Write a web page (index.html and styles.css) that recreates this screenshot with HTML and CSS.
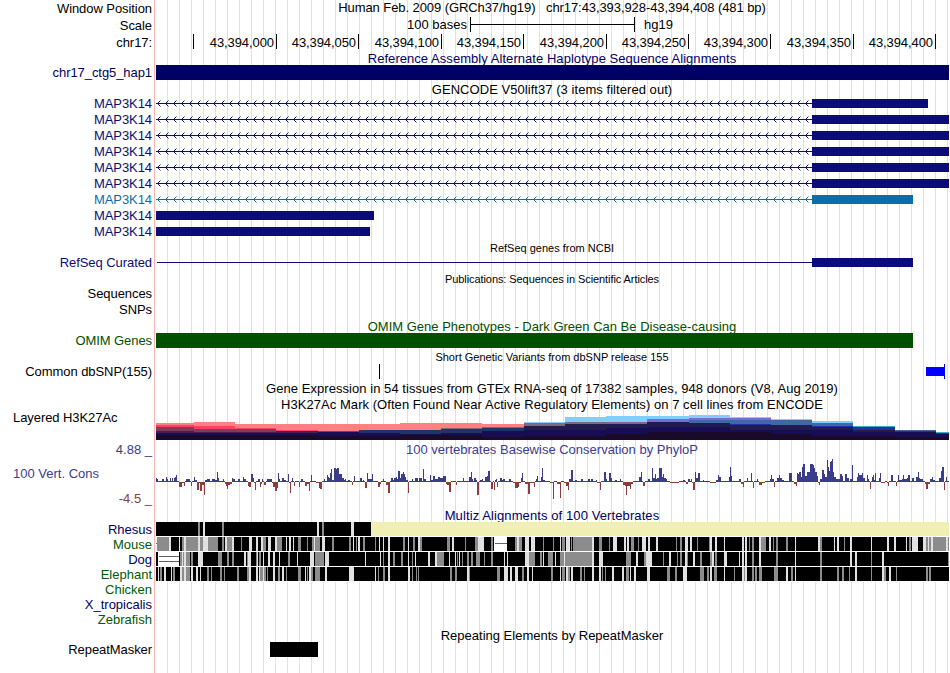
FILE: index.html
```html
<!DOCTYPE html>
<html lang="en">
<head>
    <meta charset="UTF-8">
    <title>Human chr17:43,393,928-43,394,408</title>
    <link rel="stylesheet" href="styles.css">
</head>
<body>
    <main class="browser">
        <!-- position, scale and ruler -->
        <div class="row ruler-row">
            <div class="label">Window Position</div>
            <div class="track title tight">Human Feb. 2009 (GRCh37/hg19) &nbsp; chr17:43,393,928-43,394,408 (481 bp)</div>
        </div>
        <div class="row ruler-row">
            <div class="label">Scale</div>
            <div class="track scale">
                <span class="scale-left">100 bases</span>
                <span class="scale-bar"></span>
                <span>hg19</span>
            </div>
        </div>
        <div class="row ruler-row">
            <div class="label">chr17:</div>
            <div class="track ruler">
                <span></span>
                <span>43,394,000</span>
                <span>43,394,050</span>
                <span>43,394,100</span>
                <span>43,394,150</span>
                <span>43,394,200</span>
                <span>43,394,250</span>
                <span>43,394,300</span>
                <span>43,394,350</span>
                <span>43,394,400</span>
            </div>
        </div>

        <div class="row title-row short hap">
            <div class="label"></div>
            <div class="track title wide">Reference Assembly Alternate Haplotype Sequence Alignments</div>
        </div>
        <div class="row hap">
            <div class="label">chr17_ctg5_hap1</div>
            <div class="track"><svg viewBox="155 0 794 16"><rect x="156" y="0" width="793" height="15"/></svg></div>
        </div>

        <div class="row title-row">
            <div class="label"></div>
            <div class="track title wide">GENCODE V50lift37 (3 items filtered out)</div>
        </div>
        <div id="genes"></div>

        <div class="row title-row small">
            <div class="label"></div>
            <div class="track title">RefSeq genes from NCBI</div>
        </div>
        <div class="row gene">
            <div class="label">RefSeq Curated</div>
            <div class="track"><svg viewBox="155 0 794 16"><rect x="157" y="7" width="655" height="1"/><rect x="812" y="3" width="101" height="9"/></svg></div>
        </div>

        <div class="row title-row small">
            <div class="label"></div>
            <div class="track title tight">Publications: Sequences in Scientific Articles</div>
        </div>
        <div class="row">
            <div class="label">Sequences</div>
            <div class="track"></div>
        </div>
        <div class="row">
            <div class="label">SNPs</div>
            <div class="track"></div>
        </div>

        <div class="row title-row omim">
            <div class="label"></div>
            <div class="track title">OMIM Gene Phenotypes - Dark Green Can Be Disease-causing</div>
        </div>
        <div class="row omim">
            <div class="label">OMIM Genes</div>
            <div class="track"><svg viewBox="155 0 794 16"><rect x="156" y="0" width="757" height="15"/></svg></div>
        </div>

        <div class="row title-row small">
            <div class="label"></div>
            <div class="track title">Short Genetic Variants from dbSNP release 155</div>
        </div>
        <div class="row">
            <div class="label">Common dbSNP(155)</div>
            <div class="track"><svg viewBox="155 0 794 16"><rect x="379" y="0" width="1" height="15"/><g class="snp"><rect x="926" y="3" width="18" height="9"/><rect x="944" y="0" width="1" height="15"/></g></svg></div>
        </div>

        <div class="row gtex">
            <div class="label"></div>
            <div class="track title wide">Gene Expression in 54 tissues from GTEx RNA-seq of 17382 samples, 948 donors (V8, Aug 2019)</div>
        </div>
        <div class="row title-row">
            <div class="label"></div>
            <div class="track title wide">H3K27Ac Mark (Often Found Near Active Regulatory Elements) on 7 cell lines from ENCODE</div>
        </div>
        <div class="row histone-row">
            <div class="label label-left">Layered H3K27Ac</div>
            <div class="track"><svg id="histone" viewBox="155 411 794 31"></svg></div>
        </div>

        <div class="row cons-row">
            <div class="label cons-labels">
                <span>4.88 _</span>
                <span class="cons-name">100 Vert. Cons</span>
                <span class="cons-min">-4.5 _</span>
            </div>
            <div class="track cons-track">
                <div class="title cons-title">100 vertebrates Basewise Conservation by PhyloP</div>
                <svg id="phylop" viewBox="155 458 794 50"></svg>
            </div>
        </div>

        <div class="row title-row short hap">
            <div class="label"></div>
            <div class="track title wider">Multiz Alignments of 100 Vertebrates</div>
        </div>
        <div id="species"></div>

        <div class="row title-row">
            <div class="label"></div>
            <div class="track title">Repeating Elements by RepeatMasker</div>
        </div>
        <div class="row">
            <div class="label">RepeatMasker</div>
            <div class="track"><svg viewBox="155 0 794 16"><rect x="270" y="0" width="48" height="15"/></svg></div>
        </div>
        <div class="row filler">
            <div class="label"></div>
            <div class="track"></div>
        </div>
    </main>
    <script src="tracks.js"></script>
</body>
</html>
```
FILE: styles.css
```css
body {
    margin: 0;
    background: #fff;
    color: #000;
    font-family: "Liberation Sans", Arial, sans-serif;
    font-size: 13px;
    overflow: hidden;
}
.browser {
    width: 949px;
    height: 673px;
    display: flex;
    flex-direction: column;
    /* guide lines every 12px */
    background: repeating-linear-gradient(to right, #dcdcff 0, #dcdcff 1px, transparent 1px, transparent 12px) 167px 0 / 782px 100% no-repeat;
}
.row {
    display: flex;
    flex: none;
    height: 16px;
    line-height: 16px;
    white-space: nowrap;
}
.label {
    width: 152px;
    padding-right: 2px;
    text-align: right;
    letter-spacing: -0.07px;
    border-right: 1px solid #ffb4b4;
    flex: none;
}
.track {
    width: 794px;
}
.title {
    text-align: center;
}
.tight {
    letter-spacing: -0.08px;
}
.wide {
    letter-spacing: 0.05px;
}
.wider {
    letter-spacing: 0.1px;
}
svg {
    display: block;
    width: 794px;
    fill: currentColor;
    shape-rendering: crispEdges;
}
.ruler-row {
    height: 17px;
    line-height: 18px;
}
.ruler-row .title {
    line-height: 16px;
}
.title-row {
    height: 15px;
    line-height: 17px;
}
.title-row.short {
    height: 14px;
    line-height: 15px;
}
.title-row.small {
    font-size: 11px;
    line-height: 16px;
}
.gtex {
    line-height: 18px;
}

.scale {
    display: flex;
    line-height: 16px;
}
.scale-left {
    width: 312px;
    margin-right: 3px;
    text-align: right;
}
.scale-bar {
    width: 163px;
    height: 15px;
    margin-right: 9px;
    border: solid #000;
    border-width: 0 1px;
    background: linear-gradient(#000, #000) 0 7px / 100% 1px no-repeat;
}
.ruler {
    display: grid;
    grid-template-columns: 39px 83px 82px 83px 82px 83px 82px 82px 83px 82px;
    letter-spacing: -0.08px;
}
.ruler span {
    height: 15px;
    padding-right: 2px;
    text-align: right;
    border-right: 1px solid #000;
}

.hap {
    color: #000064;
}
.gene {
    color: #0c0c78;
}
.gene.alt {
    color: #0c6cac;
}
.omim {
    color: #005000;
}
.snp {
    fill: #00f;
}

.histone-row {
    height: 31px;
    line-height: 14px;
}
.label-left {
    width: 141px;
    padding-left: 13px;
    padding-right: 0;
    text-align: left;
}
.cons-row {
    height: 66px;
    color: #3c3c8c;
}
.cons-labels {
    display: flex;
    flex-direction: column;
    letter-spacing: 0;
}
.cons-name {
    margin-top: 8px;
    padding-left: 13px;
    text-align: left;
}
.cons-min {
    margin-top: 9px;
    color: #8c3c3c;
}
.cons-title {
    height: 16px;
}

.species {
    height: 15px;
    line-height: 16px;
    color: #000064;
}
.species .label {
    letter-spacing: 0;
}
.species.green {
    color: #005a00;
}
.aligned .track {
    background: #fff;
}
.filler {
    flex: 1;
}
```
FILE: tracks.js
```javascript
const RIGHT = 949;

function rect(x, y, w, h, fill) {
    return `<rect x="${x}" y="${y}" width="${w}" height="${h}" fill="${fill}"/>`;
}

function row(cls, name, svg) {
    return `<div class="row ${cls}"><div class="label">${name}</div><div class="track">${svg}</div></div>`;
}

// transcripts: [exon start, exon end, has intron, extra class]
const genes = [
    [812, 928, true, ''],
    [812, 949, true, ''],
    [812, 949, true, ''],
    [812, 949, true, ''],
    [812, 949, true, ''],
    [812, 949, true, ''],
    [812, 913, true, 'alt'],
    [156, 374, false, ''],
    [156, 370, false, '']
];

document.getElementById('genes').innerHTML = genes.map(([start, end, intron, cls]) => {
    let body = '';
    if (intron) {
        body += rect(156, 7, start - 156, 1, 'currentColor');
        let tips = '';
        for (let x = 157; x < start - 3; x += 8) {
            for (let i = 1; i < 3; i++) {
                body += rect(x + i, 7 - i, 1, 1, 'currentColor');
                body += rect(x + i, 7 + i, 1, 1, 'currentColor');
            }
            tips += rect(x + 3, 4, 1, 1, 'currentColor') + rect(x + 3, 10, 1, 1, 'currentColor');
        }
        body += `<g opacity="0.45">${tips}</g>`;
    }
    body += rect(start, 3, end - start, 9, 'currentColor');
    return row('gene ' + cls, 'MAP3K14', `<svg viewBox="155 0 794 16">${body}</svg>`);
}).join('');

// histone layers, each column is x followed by y/colour steps
const inks = {
    p: '#ff8080', h: '#ff4068', m: '#803c54', v: '#4c1c50', n: '#180c54', k: '#180a28',
    s: '#203468', g: '#806880', c: '#80d0ff', i: '#201c50', u: '#8068d0', b: '#4068a8',
    r: '#2030a8', t: '#38b0b8'
};
const histone = [
    '156 423p 425h 427m 431v 433n 435k',
    '194 422p 426h 429m 432v 433n 435k',
    '235 424p 428h 429m 432v 433n 435k',
    '276 424p 430h 431v 433n 435k',
    '318 424p 431m 432n 436k',
    '359 424p 430s 433n 436k',
    '400 423p 430s 434n 435k',
    '441 423p 428g 429s 433n 435k',
    '482 424p 427g 428s 431n 437k',
    '524 422c 423g 426i 430n 436k',
    '565 417c 422g 424i 430n 436k',
    '606 416c 422g 424i 428n 434k',
    '647 416c 419u 422i 427n 432k',
    '689 415c 418u 420b 423i 427n 432k',
    '730 417c 418u 420b 424r 425i 430n 432k',
    '771 419c 420b 425i 430n 434k',
    '812 421c 423b 426r 427i 430n 436k',
    '853 426t 427r 430i 432n 436k',
    '895 430b 431r 432n 437k',
    '936 432t 433r 434n 437k'
].map(s => s.split(' '));

document.getElementById('histone').innerHTML = histone.map((col, n) => {
    const x = +col[0];
    const end = n + 1 < histone.length ? +histone[n + 1][0] : RIGHT;
    return col.slice(1).map(s => {
        const y = parseInt(s);
        return rect(x, y, end - x, 440 - y, inks[s.slice(-1)]);
    }).join('');
}).join('');

// phyloP scores as x,height steps, negative values hang below the axis
const phylop = `156,4 157,3 158,1 162,3 164,1 166,5 167,3 168,1 170,4 171,1 172,4 173,1 174,4 175,5 176,7 177,1
179,-5 182,-1 184,-4 185,0 186,3 190,0 191,-4 192,0 193,1 194,5 195,2 197,-8 199,-1 200,-9 202,-3 204,-13 205,2 207,3
210,1 212,3 215,2 217,10 218,4 219,1 223,3 224,1 225,-2 226,-4 227,-7 228,-3 230,-2 232,4 233,3 235,0 238,3 240,0
241,1 243,5 244,3 246,0 248,-4 249,-5 251,8 253,4 254,-1 255,-8 256,0 257,1 258,3 260,-5 261,-2 262,3 263,1
264,-3 266,1 267,3 272,-1 273,-5 275,-9 277,-6 278,9 279,3 280,1 282,4 284,2 286,1 288,8 289,-1 290,-11 291,1
292,4 293,1 294,-4 295,1 297,1 299,-5 300,1 301,3 303,1 305,-4 307,-2 309,-9 310,1 311,7 312,1 316,-1 319,-6
320,-7 322,1 324,3 325,1 327,7 328,5 329,4 330,9 331,13 332,2 334,14 336,13 337,14 339,8 342,4 344,2 345,3 346,1
348,2 350,1 352,-3 353,1 354,6 355,1 360,4 362,1 363,2 364,1 365,-6 367,9 368,3 370,3 372,8 373,1 378,-5 380,-2
381,1 383,3 384,1 386,-3 388,-11 390,1 391,4 393,2 394,4 396,5 397,3 398,11 400,4 401,8 403,10 404,8 405,5 406,2
408,-11 409,1 412,3 413,1 415,4 418,1 419,4 422,1 423,13 424,3 426,1 430,7 431,2 433,6 435,3 438,5 440,4 443,6
446,-2 447,-3 449,-10 451,0 452,1 456,-3 457,1 463,4 464,1 469,5 471,10 472,3 473,1 474,4 476,2 477,-13 479,1
480,2 482,3 483,1 485,5 487,6 488,11 490,1 491,-7 493,1 494,-8 495,2 496,3 497,-5 498,1 500,4 502,2 503,3 505,1
509,3 511,1 513,-1 515,-6 518,-5 519,-1 521,4 522,9 523,1 525,-2 528,-12 530,-1 534,-5 535,1 536,3 537,6 538,1
541,5 542,14 543,2 545,1 550,-1 553,-17 554,1 557,-2 560,-16 561,1 564,-1 566,-4 568,-8 569,3 571,12 573,1
575,2 577,1 581,3 583,1 588,3 590,1 591,3 593,1 596,2 597,-1 600,-8 601,1 604,10 606,3 607,1 609,9 611,4 612,1
615,2 617,1 620,3 621,1 623,-3 625,-4 626,-13 627,-4 630,-7 631,-2 633,0 637,1 639,5 641,10 642,1 643,-4 645,0
648,3 650,1 652,14 653,4 655,8 656,3 657,4 659,14 662,5 663,8 664,4 666,3 667,1 670,-1 679,1 681,0 683,2 685,0
686,-2 688,3 690,1 691,3 692,-1 693,-8 695,10 696,4 698,9 700,1 703,2 704,1 710,-1 716,2 718,7 719,5 721,1
729,5 730,15 731,6 732,1 739,3 741,-2 743,-5 744,1 747,4 748,1 751,9 752,1 753,-6 754,1 757,3 758,1 759,-3 762,-1
765,1 770,3 771,7 772,3 774,-5 775,1 777,4 779,7 780,4 782,2 784,1 789,9 792,1 794,-2 796,-4 797,9 798,8 799,10
801,5 802,15 803,18 805,6 807,10 810,18 813,17 814,14 815,10 817,6 818,-1 819,-3 820,3 822,12 824,8 825,5 827,22
828,15 829,11 830,20 831,21 832,23 833,10 834,5 836,3 840,8 842,6 843,1 845,8 847,4 849,1 850,3 852,17 853,1
857,5 858,9 859,7 862,9 863,4 865,1 867,7 868,3 869,1 870,-7 871,1 872,5 873,7 874,2 875,9 876,1 879,4 880,9
881,-1 885,1 887,-1 888,-4 889,1 891,7 893,1 896,-4 897,1 898,7 899,2 902,3 903,7 904,3 907,4 908,7 910,1 912,4
914,1 916,5 918,10 919,4 920,3 923,1 925,-2 926,-7 928,-2 930,3 932,5 933,2 935,1 939,4 941,11 942,15 944,-8
945,1 946,5 947,1 949,0`.split(/\s+/).map(s => s.split(',').map(Number));

let bars = '';
for (let i = 0; i < phylop.length - 1; i++) {
    const [x, h] = phylop[i];
    const w = phylop[i + 1][0] - x;
    bars += h >= 0
        ? rect(x, 482 - Math.max(h, 1), w, Math.max(h, 1), '#3c3c8c')
        : rect(x, 482, w, -h, '#8c3c3c');
}
document.getElementById('phylop').innerHTML = bars;

// alignment shading: g mid identity, l low identity, w gap, y missing, everything else is black
const shades = { g: '#8c8c8c', l: '#e1e1e1', w: '#ffffff', y: '#f0f0b4' };
const species = [
    ['Rhesus', '', 'g198-200 l203-205 g222-224 l317-319 g322-324 l351-354 y371-949'],
    ['Mouse', 'green', `w156-157 g157-169 l169-171 l179-180 g182-184 l184-186 g186-198 l198-200 g200-203 l203-208 g208-218
        g222-224 l225-227 g227-232 l232-234 g241-242 l249-252 l256-258 l261-263 g263-266 l268-271 l275-277 g277-282
        l286-287 l289-291 l293-294 g298-301 g307-308 g312-314 l314-315 g315-320 l322-325 g332-334 g349-351 l353-354
        g356-357 l358-360 g363-365 g375-376 l379-380 l383-384 l388-390 g403-405 l408-409 g413-415 l418-420 g420-422
        g447-450 l452-454 g465-466 g475-478 l478-484 g491-493 w494-507 g515-517 l517-519 g519-522 l525-529 l531-535
        g543-544 g553-554 l560-561 g562-565 l566-570 g571-572 g573-592 l592-594 g599-602 g609-610 l613-617 l624-626
        l627-629 g631-634 g638-639 l642-646 l648-650 l656-658 g676-677 g680-682 l685-688 l690-692 g697-698 g709-710
        l710-712 l715-717 l724-725 l742-744 l745-747 g749-750 g752-754 l759-761 g761-766 l769-771 g773-774 g776-778
        g786-788 l795-796 l818-820 g820-822 l834-835 l837-839 g844-845 l850-852 l871-872 l887-889 l894-896 l906-907
        g909-911 l912-918 l923-926 g926-928 l928-929 g929-931 l931-933 g933-946 l946-948 g948-949`],
    ['Dog', '', `w158-179 g180-182 l182-183 g183-184 l184-186 g186-190 g191-193 l198-203 g218-222 g227-229 g232-234 l244-246
        g247-248 l248-251 g256-257 l257-258 g259-261 l263-264 l268-270 l273-275 l279-280 g288-290 l297-298 l310-314
        g315-324 l325-329 l365-366 l380-381 g383-384 l388-390 g393-395 g401-403 l408-409 g412-413 l415-416 l428-430
        l435-437 g437-444 l449-450 l455-456 g457-458 l459-460 g462-463 g467-469 g471-473 g476-480 g484-485 g491-493
        l504-505 l507-508 l525-529 g529-535 g540-542 l543-544 g548-553 l555-556 g560-564 l564-565 g565-592 l592-594
        l599-603 g626-631 l636-638 g644-646 l646-648 l648-652 g663-664 l669-671 g677-678 g680-682 l685-687 g687-688
        l693-695 g700-702 g710-712 l712-714 g715-717 l724-727 l739-740 l742-744 l745-747 g752-754 l759-761 g776-778
        l795-796 g820-822 l850-852 l855-857 g871-872 l882-884 g948-949`],
    ['Elephant', 'green', `l158-159 g160-162 l164-166 l171-172 g173-175 l180-182 g182-184 l184-186 g186-190 l191-193 l196-198
        l200-201 g207-209 g211-212 g220-222 g224-225 g237-239 g247-249 l249-251 l256-258 l259-260 g260-263 l263-264
        g264-266 g267-268 l273-275 g278-280 l282-284 g286-287 g298-301 l305-306 g307-308 l309-311 g311-313 g315-320
        l325-327 l349-354 l375-376 g378-379 g383-385 l388-390 l408-410 g412-413 g416-417 g418-419 g450-452 g455-457
        l467-469 g469-470 g497-500 l504-508 l510-512 l515-518 g522-524 l527-529 l532-533 g551-553 l560-561 g562-565
        l566-568 g568-570 l571-573 g580-582 g584-585 l592-594 l599-601 g602-603 g605-606 l612-614 l622-624 g626-629
        l630-631 l634-636 l647-650 g667-670 g675-677 l683-687 g700-704 g707-709 l710-712 g714-717 l724-725 g734-735
        l742-744 g744-745 l745-747 g752-754 g755-757 g759-761 g761-762 g774-778 l786-788 g791-793 l795-796 g820-822
        g837-839 g842-844 g849-850 l855-857 g871-872 l882-884 g884-886 l889-891 g896-897 g926-928 g929-931`]
];

// thin connector lines inside the gaps: [x, y, width]
const gaps = {
    Mouse: [[156, 6, 1], [495, 6, 12]],
    Dog: [[159, 4, 20], [159, 9, 20]]
};

let html = species.map(([name, cls, runs]) => {
    let body = rect(156, 0, RIGHT - 156, 14, '#000');
    for (const run of runs.trim().split(/\s+/)) {
        const [a, b] = run.slice(1).split('-').map(Number);
        body += rect(a, 0, b - a, 14, shades[run[0]]);
    }
    for (const [x, y, w] of gaps[name] || []) {
        body += rect(x, y, w, 1, '#646464');
    }
    return row('species aligned ' + cls, name, `<svg viewBox="155 0 794 15">${body}</svg>`);
}).join('');

html += row('species green', 'Chicken', '');
html += row('species', 'X_tropicalis', '');
html += row('species green', 'Zebrafish', '');
document.getElementById('species').innerHTML = html;
```
